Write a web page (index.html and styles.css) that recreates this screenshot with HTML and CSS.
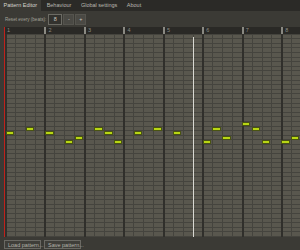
FILE: index.html
```html
<!DOCTYPE html>
<html lang="en">
<head>
    <meta charset="UTF-8">
    <title>Pattern Editor</title>
    <link rel="stylesheet" href="styles.css">
</head>
<body>
    <div class="tabs">
        <div class="tab active">Pattern Editor</div>
        <div class="tab">Behaviour</div>
        <div class="tab">Global settings</div>
        <div class="tab">About</div>
    </div>

    <div class="toolbar">
        <span class="label">Reset every (beats):</span>
        <span class="num-input">8</span>
        <span class="step-btn">-</span>
        <span class="step-btn">+</span>
    </div>

    <div class="editor">
        <div class="ruler">
            <div class="beat first">1</div>
            <div class="beat">2</div>
            <div class="beat">3</div>
            <div class="beat">4</div>
            <div class="beat">5</div>
            <div class="beat">6</div>
            <div class="beat">7</div>
            <div class="beat">8</div>
        </div>
        <div class="grid" id="grid">
            <div class="playhead"></div>
        </div>
    </div>

    <div class="footer">
        <button class="btn">Load pattern...</button>
        <button class="btn">Save pattern...</button>
    </div>

    <script>
        // col = step (0..29), row = pitch row from the top
        const notes = [
            [0, 21], [2, 20], [4, 21], [6, 23], [7, 22],
            [9, 20], [10, 21], [11, 23], [13, 21], [15, 20],
            [17, 21], [20, 23], [21, 20], [22, 22], [24, 19],
            [25, 20], [26, 23], [28, 23], [29, 22]
        ];
        const grid = document.getElementById('grid');
        notes.forEach(function(n) {
            const el = document.createElement('div');
            el.className = 'note';
            el.style.gridColumn = (n[0] + 1);
            el.style.gridRow = (n[1] + 1);
            grid.appendChild(el);
        });
    </script>
</body>
</html>
```

FILE: styles.css
```css
body {
    margin: 0;
    width: 300px;
    height: 250px;
    overflow: hidden;
    background-color: #3b3a35;
    font-family: "Liberation Sans", Arial, sans-serif;
    font-size: 5.5px;
    color: #c9c8c0;
}
.tabs {
    display: flex;
    height: 11px;
    background-color: #2b2a27;
}
.tab {
    padding: 0 3.5px;
    line-height: 11px;
    margin-right: 2.5px;
    color: #b9b8b0;
    white-space: nowrap;
}
.tab.active {
    background-color: #3b3a35;
    color: #d6d5cd;
}
.toolbar {
    display: flex;
    align-items: center;
    gap: 2px;
    height: 16px;
    padding-left: 5px;
}
.label {
    color: #a3a29a;
    font-size: 4.6px;
    white-space: nowrap;
}
.num-input {
    width: 12px;
    height: 9px;
    line-height: 9px;
    text-align: center;
    border: 1px solid #6c6b64;
    background-color: #33322e;
}
.step-btn {
    width: 9px;
    height: 9px;
    line-height: 9px;
    text-align: center;
    background-color: #4a4944;
    border: 1px solid #55544e;
    margin-left: -1px;
}
.editor {
    margin-left: 4px;
    border-left: 1px solid #c0221c;
    overflow: hidden;
}
.ruler {
    display: grid;
    grid-template-columns: repeat(8, 39.47px);
    height: 7px;
    background-color: #2a2926;
}
.beat {
    border-left: 2px solid #8a8982;
    padding-left: 2px;
    line-height: 7px;
    color: #8d8c85;
}
.beat.first {
    border-left: none;
}
.grid {
    position: relative;
    display: grid;
    grid-template-columns: repeat(30, 1fr);
    grid-template-rows: repeat(44, 1fr);
    height: 203px;
    background-color: #59574e;
    background-image:
        repeating-linear-gradient(90deg, #302f2b 0, #302f2b 2px, transparent 2px, transparent 39.47px),
        repeating-linear-gradient(90deg, #45443e 0, #45443e 1px, transparent 1px, transparent 9.87px),
        repeating-linear-gradient(0deg, #45443e 0, #45443e 1px, transparent 1px, transparent 4.6px);
}
.note {
    align-self: center;
    height: 4px;
    margin: 0 0.5px 0 1px;
    background-color: #b8d614;
    border: 1px solid #4a5412;
    box-sizing: border-box;
}
.playhead {
    position: absolute;
    left: 188px;
    top: 3px;
    bottom: 0;
    width: 1px;
    background-color: #d8d8d2;
}
.footer {
    display: flex;
    gap: 3px;
    padding: 3px 4px;
}
.btn {
    font-family: "Liberation Sans", Arial, sans-serif;
    font-size: 5.5px;
    color: #b5b4ac;
    background-color: #3f3e39;
    border: 1px solid #6a6963;
    padding: 0 3px;
    height: 9px;
    width: 37px;
    white-space: nowrap;
}
```
